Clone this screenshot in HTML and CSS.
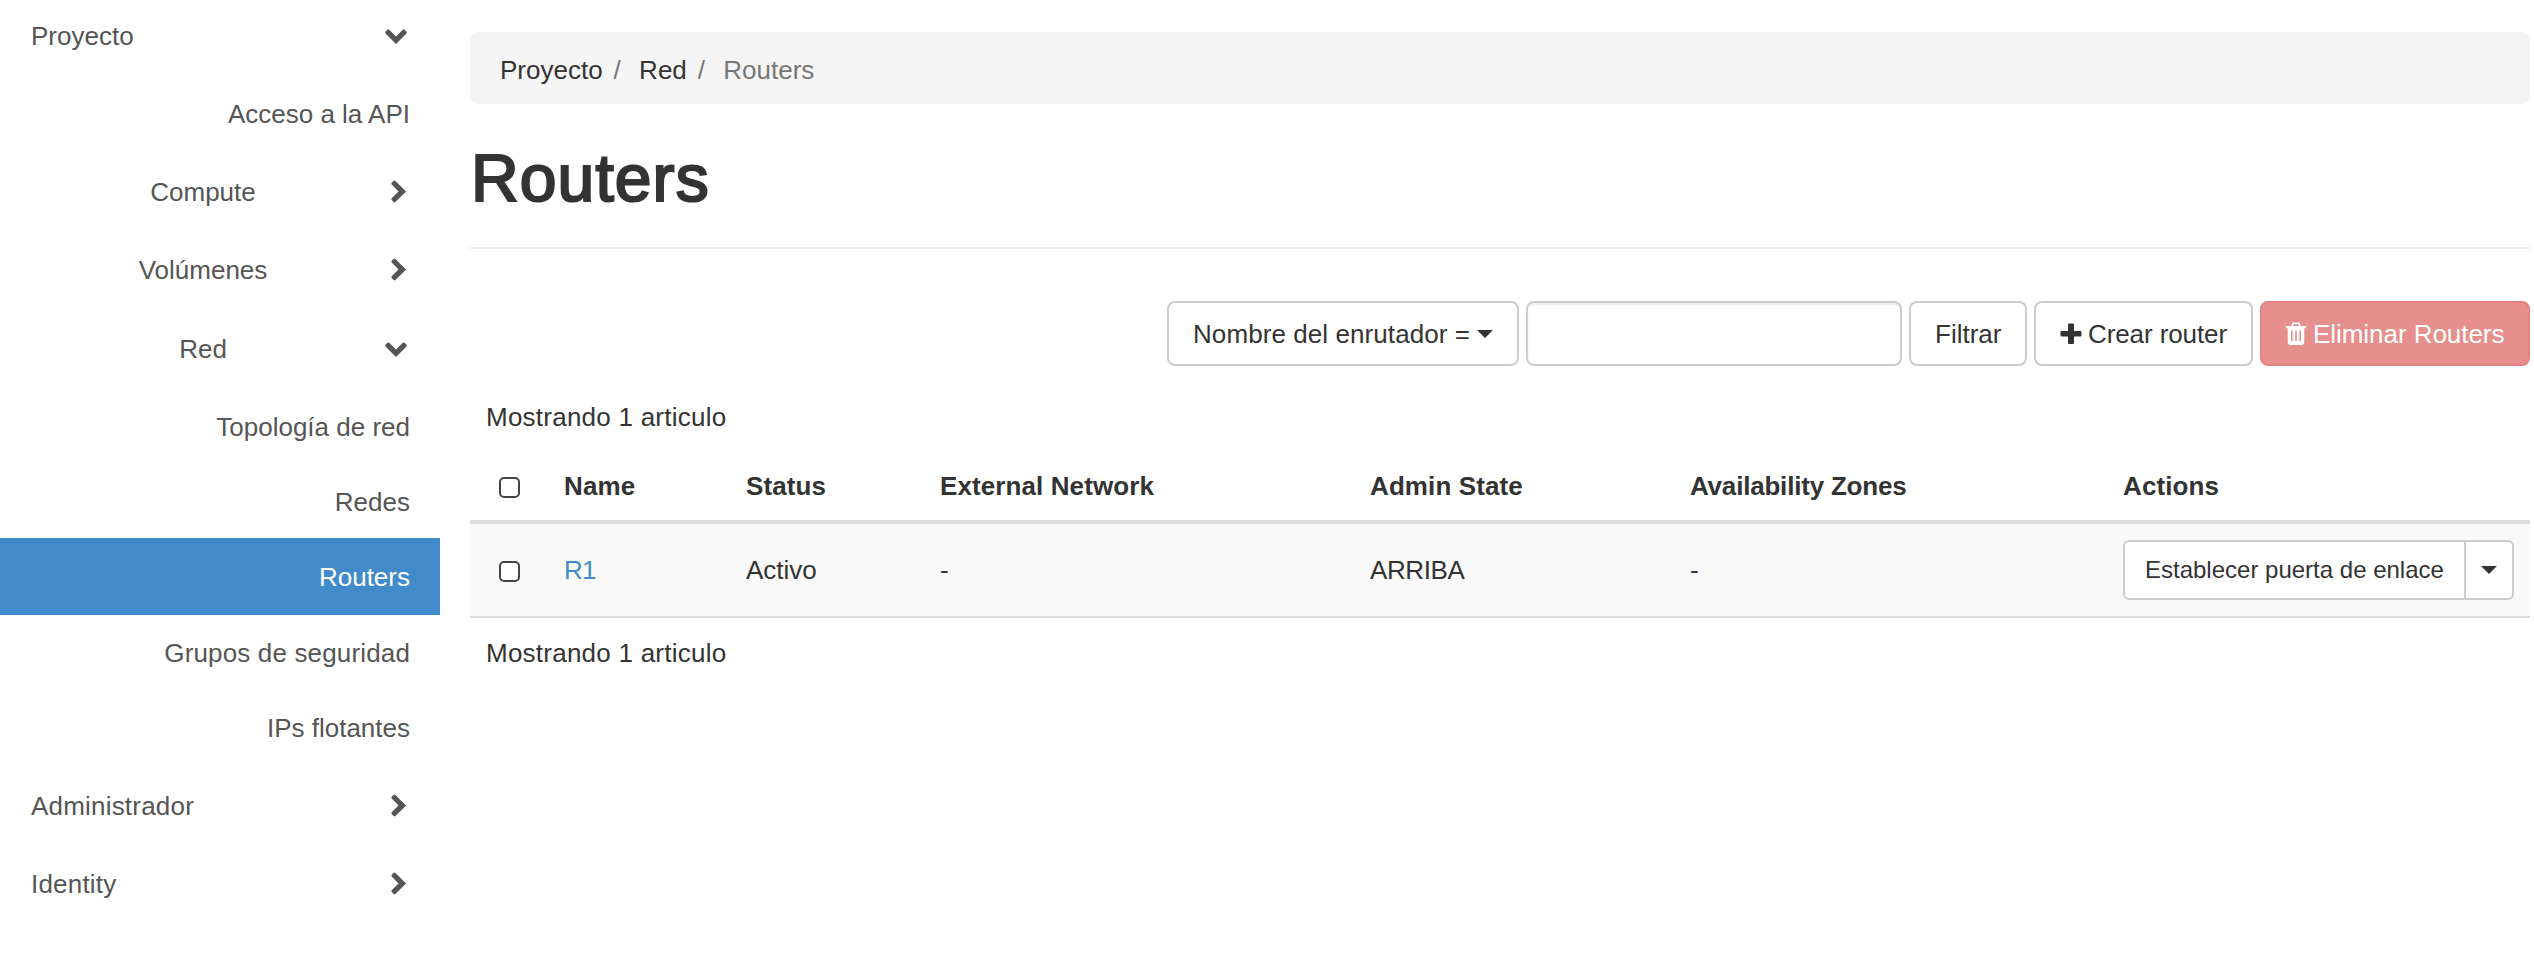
FILE: index.html
```html
<!DOCTYPE html>
<html lang="es">
<head>
<meta charset="utf-8">
<title>Routers</title>
<link rel="stylesheet" href="styles.css">
</head>
<body>
<svg class="defs" width="0" height="0" aria-hidden="true">
  <symbol id="down" viewBox="0 -1.4 24 24"><path d="M1.500 6.300 3.400 4.400Q4.300 3.600 5.200 4.400L12 11 18.800 4.400Q19.700 3.600 20.600 4.400L22.500 6.300Q23.400 7.200 22.500 8.100L12 18.600 1.500 8.100Q.6 7.200 1.500 6.300z" fill="currentColor"/></symbol>
  <symbol id="right" viewBox="-2.300 0 24 24"><path d="M7.300 .9 5.400 2.800Q4.500 3.700 5.400 4.600L12.200 11.500 5.400 18.300Q4.500 19.200 5.400 20.100L7.300 22Q8.200 22.900 9.100 22L19.800 11.500 9.100 .9Q8.200 0 7.300 .9z" fill="currentColor"/></symbol>
</svg>
<div class="layout">
  <nav class="sidebar">
    <a class="item top"><span class="label">Proyecto</span><svg class="chev"><use href="#down"/></svg></a>
    <a class="item leaf"><span class="label">Acceso a la API</span></a>
    <a class="item group"><span class="label">Compute</span><svg class="chev"><use href="#right"/></svg></a>
    <a class="item group"><span class="label">Volúmenes</span><svg class="chev"><use href="#right"/></svg></a>
    <a class="item group low"><span class="label">Red</span><svg class="chev"><use href="#down"/></svg></a>
    <div class="submenu">
      <a class="item sub">Topología de red</a>
      <a class="item sub short">Redes</a>
      <a class="item sub active">Routers</a>
      <a class="item sub tall">Grupos de seguridad</a>
      <a class="item sub">IPs flotantes</a>
    </div>
    <a class="item top"><span class="label wide">Administrador</span><svg class="chev"><use href="#right"/></svg></a>
    <a class="item top"><span class="label wide">Identity</span><svg class="chev"><use href="#right"/></svg></a>
  </nav>
  <main class="main">
    <div class="breadcrumb"><a>Proyecto</a><span class="sep">/</span><a>Red</a><span class="sep">/</span><span class="current">Routers</span></div>
    <h1 class="title">Routers</h1>
    <div class="toolbar">
      <button class="btn filter">Nombre del enrutador =<i class="caret"></i></button>
      <input class="search" type="text" aria-label="Filtro">
      <button class="btn submit">Filtrar</button>
      <button class="btn create"><svg class="icon" viewBox="0 0 22 22"><path d="M8 1.500Q8 .5 9 .5h4q1 0 1 1V8h6.500q1 0 1 1v3.500q0 1-1 1H14V20q0 1-1 1H9q-1 0-1-1v-6.500H1.500q-1 0-1-1V9q0-1 1-1H8z" fill="currentColor"/></svg>Crear router</button>
      <button class="btn danger"><svg class="icon trash" viewBox="0 0 20 23"><path d="M6 4.500 7 1.300h6l1 3.200" fill="none" stroke="currentColor" stroke-width="1.800"/><path fill-rule="evenodd" fill="currentColor" d="M0 4h20v2.200h-1.700V20q0 3-2.600 3H4.300Q1.700 23 1.700 20V6.200H0zM5 8.500v10.500h1.600V8.500zM9.200 8.500v10.500h1.600V8.500zM13.400 8.500v10.500H15V8.500z"/></svg>Eliminar Routers</button>
    </div>
    <p class="count">Mostrando 1 articulo</p>
    <table class="table">
      <colgroup><col class="c-check"><col class="c-name"><col class="c-status"><col class="c-ext"><col class="c-admin"><col class="c-zones"><col></colgroup>
      <thead><tr><th><input class="check" type="checkbox"></th><th>Name</th><th>Status</th><th>External Network</th><th>Admin State</th><th class="zones">Availability Zones</th><th>Actions</th></tr></thead>
      <tbody><tr><td><input class="check" type="checkbox"></td><td><a class="link">R1</a></td><td>Activo</td><td>-</td><td class="state">ARRIBA</td><td>-</td>
        <td><div class="split"><button class="action">Establecer puerta de enlace</button><button class="toggle" aria-label="Más"><i class="caret"></i></button></div></td></tr></tbody>
    </table>
    <p class="count bottom">Mostrando 1 articulo</p>
  </main>
</div>
</body>
</html>
```
FILE: styles.css
```css
* { box-sizing: border-box; }
body { margin: 0; background: #fff; color: #333; font: 26px/40px "Liberation Sans", Arial, sans-serif; }
button, input { font: inherit; color: inherit; margin: 0; }
.defs { display: block; }
.layout { display: flex; height: 954px; overflow: hidden; }

.sidebar { width: 440px; flex: none; color: #555; }
.item { display: flex; align-items: center; height: 72px; padding: 0 30px 0 31px; margin-bottom: 6px; white-space: nowrap; }
.label { flex: 1; }
.wide { letter-spacing: .2px; }
.leaf .label { text-align: right; }
.group .label { text-align: center; }
.low { padding-top: 2px; }
.chev { width: 24px; height: 24px; margin: 0 2px 0 9px; flex: none; }
.submenu { margin: 0 0 5px; }
.sub { height: 74px; margin: 0; justify-content: flex-end; }
.sub.short { padding-top: 1px; }
.sub.active { height: 77px; background: #428bca; color: #fff; }
.sub.tall { height: 76px; letter-spacing: .15px; }

.main { width: 2060px; margin-left: 30px; padding-top: 32px; }
.breadcrumb { display: flex; align-items: center; height: 72px; padding: 3px 30px 0; background: #f5f5f5; border-radius: 8px; }
.sep { width: 36.500px; padding-left: 11px; color: #777; }
.current { color: #777; }
.title { margin: 0; padding: 38px 0 33px 1px; border-bottom: 2px solid #eee; font-size: 66px; line-height: 72px; font-weight: 400; letter-spacing: 1.1px; -webkit-text-stroke: 2.2px #333; }

.toolbar { display: flex; justify-content: flex-end; gap: 7px; margin-top: 52px; }
.btn { display: flex; align-items: center; height: 65px; padding: 0 24px; border: 2px solid #ccc; border-radius: 8px; background: #fff; white-space: nowrap; }
.filter { width: 352px; letter-spacing: .08px; }
.search { width: 376px; height: 65px; border: 2px solid #ccc; border-radius: 8px; box-shadow: inset 0 2px 2px rgba(0,0,0,.075); }
.submit { width: 118px; }
.create { width: 219px; letter-spacing: -.1px; }
.danger { width: 270px; background: #e68f8d; border-color: #e5817f; color: #fff; letter-spacing: -.05px; }
.icon { width: 22px; height: 22px; margin-right: 6px; flex: none; }
.trash { width: 20px; height: 23px; margin-right: 7px; }
.caret { width: 0; height: 0; border: 8px solid transparent; border-top-color: #333; border-bottom: 0; }
.filter .caret { margin-left: 7px; }

.count { margin: 31px 0 15px; padding-left: 16px; letter-spacing: .24px; }
.count.bottom { margin-top: 15px; }
.table { width: 100%; table-layout: fixed; border-collapse: separate; border-spacing: 0; }
.c-check { width: 94px; }
.c-name { width: 182px; }
.c-status { width: 194px; }
.c-ext { width: 430px; }
.c-admin { width: 320px; }
.c-zones { width: 433px; }
.table th, .table td { padding: 0; text-align: left; vertical-align: middle; white-space: nowrap; }
.table th { height: 72px; border-bottom: 4px solid #ddd; letter-spacing: .1px; }
.table th.zones { letter-spacing: -.2px; }
.table td { height: 94px; border-bottom: 2px solid #ddd; background: #f9f9f9; }
.table .state { letter-spacing: -.4px; }
.check { display: block; appearance: none; width: 21px; height: 21px; margin: 3px 0 0 28.500px; border: 2px solid #444; border-radius: 5px; background: #fff; }
.link { color: #428bca; letter-spacing: -.8px; }
.split { display: flex; width: 391px; height: 60px; border: 2px solid #ccc; border-radius: 6px; background: #fff; font-size: 24px; }
.action { width: 339px; padding: 0 0 0 20px; border: 0; background: none; text-align: left; }
.toggle { display: flex; flex: 1; align-items: center; justify-content: center; padding: 0; border: 0; border-left: 2px solid #ccc; background: none; }
```
